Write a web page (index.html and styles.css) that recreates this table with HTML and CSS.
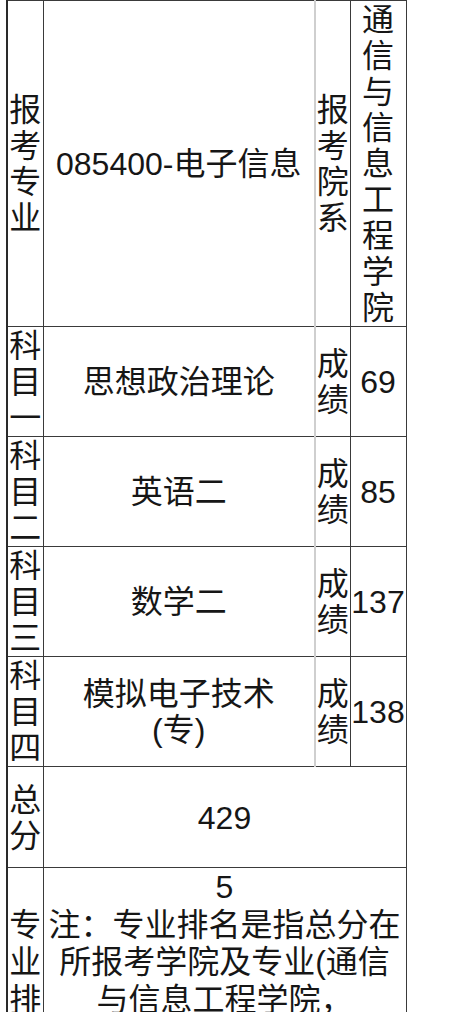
FILE: index.html
```html
<!DOCTYPE html>
<html lang="zh-CN">
<head>
<meta charset="utf-8">
<title>成绩单</title>
<link rel="stylesheet" href="styles.css">
</head>
<body>
<table class="score">
  <colgroup>
    <col class="c1">
    <col class="c2">
    <col class="c3">
    <col class="c4">
  </colgroup>
  <tr class="r-head">
    <td class="lab">报考专业</td>
    <td class="main">085400-电子信息</td>
    <td class="lab sep">报考院系</td>
    <td class="lab val">通信与信息工程学院</td>
  </tr>
  <tr class="r-sub">
    <td class="lab">科目一</td>
    <td class="main">思想政治理论</td>
    <td class="lab sep">成绩</td>
    <td class="val num">69</td>
  </tr>
  <tr class="r-sub">
    <td class="lab">科目二</td>
    <td class="main">英语二</td>
    <td class="lab sep">成绩</td>
    <td class="val num">85</td>
  </tr>
  <tr class="r-sub">
    <td class="lab">科目三</td>
    <td class="main">数学二</td>
    <td class="lab sep">成绩</td>
    <td class="val num">137</td>
  </tr>
  <tr class="r-sub">
    <td class="lab">科目四</td>
    <td class="main">模拟电子技术<br>(专)</td>
    <td class="lab sep">成绩</td>
    <td class="val num">138</td>
  </tr>
  <tr class="r-total">
    <td class="lab">总分</td>
    <td class="main" colspan="3">429</td>
  </tr>
  <tr class="r-rank">
    <td class="lab">专业排名</td>
    <td class="main note" colspan="3">5<br>注：专业排名是指总分在<br>所报考学院及专业(通信<br>与信息工程学院，<br>电子信息)全部考生中<br>的排名</td>
  </tr>
</table>
</body>
</html>
```
FILE: styles.css
```css
html, body {
  margin: 0;
  padding: 0;
  background: #ffffff;
}

body {
  font-family: "Liberation Sans", "Noto Sans CJK SC", sans-serif;
  color: #161616;
}

.score {
  margin-left: 6px;
  border-collapse: collapse;
  table-layout: fixed;
  width: 399px;
  border-left: 2px solid #2a2a2a;
  font-size: 32px;
  line-height: 36px;
}

.c1 { width: 36px; }
.c2 { width: 272px; }
.c3 { width: 35px; }
.c4 { width: 56px; }

.score td {
  border: 1px solid #3a3a3a;
  padding: 1px 0 0;
  text-align: center;
  vertical-align: middle;
  word-break: break-all;
}

.score td.sep {
  border-left: 2px solid #cfcfcf;
}

.score td.num {
  white-space: nowrap;
}

.r-total td {
  height: 99px;
}

.r-rank td {
  line-height: 37.5px;
}

.note {
  vertical-align: top;
}
```
